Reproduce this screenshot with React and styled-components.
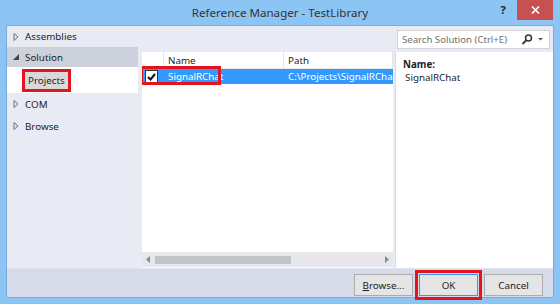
import React from 'react';
import styled, { createGlobalStyle } from 'styled-components';

const Global = createGlobalStyle`
  html, body { margin: 0; padding: 0; }
  body {
    width: 560px; height: 304px; overflow: hidden;
    font-family: "Noto Sans", "Open Sans", sans-serif;
    color: #1e1e1e;
  }
`;

const Window = styled.div`
  width: 560px; height: 304px; box-sizing: border-box;
  background: #8cc4f4;
  display: flex; flex-direction: column;
`;

const TitleBar = styled.div`
  height: 25px; flex: none;
  display: grid; grid-template-columns: 1fr auto 1fr; align-items: start;
`;

const Title = styled.div`
  grid-column: 2; line-height: 26px; font-size: 11.6px; color: #333;
`;

const Controls = styled.div`
  grid-column: 3; justify-self: end; display: flex; align-items: flex-start;
  margin-right: 7px;
`;

const HelpBtn = styled.div`
  width: 20px; height: 20px; line-height: 20px; text-align: center;
  font-size: 11px; font-weight: 700; color: #222;
  margin-right: 4px;
`;

const CloseBtn = styled.div`
  width: 36px; height: 20px; background: #c75050;
  display: flex; align-items: center; justify-content: center;
`;

const Frame = styled.div`
  flex: 1; margin: 0 6px 6px 6px; border: 1px solid #78abd9;
  display: flex; flex-direction: column; background: #e8ebf4;
  min-height: 0;
`;

const Main = styled.div`
  flex: 1; display: flex; min-height: 0;
`;

const Sidebar = styled.div`
  width: 131px; flex: none; display: flex; flex-direction: column;
`;

const NavRow = styled.div`
  height: ${p => p.$h || 22}px; display: flex; align-items: center;
  padding-left: ${p => p.$indent || 6}px;
  background: ${p => p.$bg || 'transparent'};
  font-size: 9.8px;
`;

const Arrow = styled.span`
  width: 6px; display: inline-flex; align-items: center; margin-right: 6px;
`;

const SelLabel = styled.span`
  background: #d9d9dc; padding: 0 3px; line-height: 17px;
  outline: 3px solid #e3141b; outline-offset: 0px;
`;

const RightArea = styled.div`
  flex: 1; display: flex; flex-direction: column; padding-left: 4px; min-width: 0;
`;

const TopBar = styled.div`
  height: 26px; flex: none; display: flex; align-items: center; justify-content: flex-end;
  padding-right: 3px;
`;

const Search = styled.div`
  width: 143px; height: 17px; background: #fff; border: 1px solid #cfd3dc;
  display: flex; align-items: center; padding: 0 4px 0 4px; box-sizing: content-box;
  font-size: 9.6px; color: #717171;
`;

const SearchText = styled.span` flex: 1; white-space: nowrap; `;

const Panels = styled.div`
  flex: 1; display: flex; min-height: 0;
`;

const ListPanel = styled.div`
  width: 251px; flex: none; background: #fff; display: flex; flex-direction: column;
  overflow: hidden;
`;

const HeaderRow = styled.div`
  height: 16px; display: grid; grid-template-columns: 22px 120px 1fr;
  border-bottom: 1px solid #e5e5e5; font-size: 9.8px; flex: none;
`;

const HeadCell = styled.div`
  padding-left: 4px; display: flex; align-items: center;
  border-right: 1px solid #e5e5e5; white-space: nowrap;
`;

const DataRow = styled.div`
  height: 15px; display: grid; grid-template-columns: 22px 120px 109px;
  background: #3399ff; color: #fff; font-size: 9.8px; flex: none;
  white-space: nowrap;
`;

const Cell = styled.div`
  padding-left: 4px; display: flex; align-items: center; overflow: hidden;
`;

const CheckCell = styled.div`
  display: flex; align-items: center; padding-left: 3px; position: relative;
`;

const Annot = styled.div`
  position: absolute; left: -2px; top: -3px; width: 75px; height: 13px;
  border: 3px solid #e3141b; pointer-events: none;
`;

const Box = styled.div`
  width: 11px; height: 11px; background: #fff; border: 1px solid #333;
  display: flex; align-items: center; justify-content: center;
`;

const Spacer = styled.div` flex: 1; `;

const HScroll = styled.div`
  height: 15px; flex: none; background: #e8e8ec; display: flex; align-items: center;
  padding: 0 4px; gap: 5px; margin-bottom: 1px;
`;

const Track = styled.div`
  flex: 1; height: 8px;
`;

const Thumb = styled.div`
  width: 136px; height: 8px; background: #c2c3c9;
`;

const Divider = styled.div`
  width: 3px; flex: none; border-right: 1px solid #d8dbe3; box-sizing: border-box;
`;

const Details = styled.div`
  flex: 1; background: #fff; padding: 6px 7px; font-size: 9.8px;
`;

const DetailLabel = styled.div` font-weight: 700; line-height: 13px; `;
const DetailValue = styled.div` padding-left: 2px; line-height: 13px; `;

const BottomBar = styled.div`
  height: 29px; flex: none; background: #d6dbe9; border-top: 1px solid #dfe3ee;
  box-sizing: border-box;
  display: flex; justify-content: flex-end; align-items: flex-start;
  padding: 5px 10px 0 0; gap: 6px;
`;

const BtnWrap = styled.div`
  outline: ${p => p.$marked ? '3px solid #e3141b' : 'none'};
  outline-offset: 1px;
`;

const Button = styled.div`
  width: 57px; height: 20px; background: #e5e5e5;
  border: 1px solid ${p => p.$default ? '#3399ff' : '#acacac'};
  display: flex; align-items: center; justify-content: center;
  font-size: 9.8px; color: #1e1e1e;
`;

const Collapsed = () => (
  <svg width="6" height="8" viewBox="0 0 6 8"><path d="M1 0.5 L5 4 L1 7.5 Z" fill="none" stroke="#717171" strokeWidth="1" /></svg>
);
const Expanded = () => (
  <svg width="6" height="6" viewBox="0 0 6 6"><path d="M6 0 L6 6 L0 6 Z" fill="#444" /></svg>
);

export default function App() {
  return (
    <>
      <Global />
      <Window>
        <TitleBar>
          <Title>Reference Manager - TestLibrary</Title>
          <Controls>
            <HelpBtn>?</HelpBtn>
            <CloseBtn>
              <svg width="9" height="8" viewBox="0 0 9 8"><path d="M1 0.5 L8 7.5 M8 0.5 L1 7.5" stroke="#fff" strokeWidth="1.6" /></svg>
            </CloseBtn>
          </Controls>
        </TitleBar>
        <Frame>
          <Main>
            <Sidebar>
              <NavRow $h={21}><Arrow><Collapsed /></Arrow>Assemblies</NavRow>
              <NavRow $h={20} $bg="#cdd1dc"><Arrow><Expanded /></Arrow>Solution</NavRow>
              <NavRow $h={26} $bg="#fff" $indent={18}><SelLabel>Projects</SelLabel></NavRow>
              <NavRow $h={22}><Arrow><Collapsed /></Arrow>COM</NavRow>
              <NavRow $h={22}><Arrow><Collapsed /></Arrow>Browse</NavRow>
            </Sidebar>
            <RightArea>
              <TopBar>
                <Search>
                  <SearchText>Search Solution (Ctrl+E)</SearchText>
                  <svg width="12" height="11" viewBox="0 0 12 11"><circle cx="7.5" cy="4" r="3" fill="none" stroke="#333" strokeWidth="1.5" /><path d="M5.5 6 L1.5 10" stroke="#333" strokeWidth="1.8" /></svg>
                  <svg width="9" height="8" viewBox="0 0 9 8" style={{ marginLeft: 3 }}><path d="M2 3 L7 3 L4.5 5.5 Z" fill="#555" /></svg>
                </Search>
              </TopBar>
              <Panels>
                <ListPanel>
                  <HeaderRow>
                    <HeadCell />
                    <HeadCell>Name</HeadCell>
                    <HeadCell>Path</HeadCell>
                  </HeaderRow>
                  <DataRow>
                    <CheckCell>
                      <Box>
                        <svg width="9" height="8" viewBox="0 0 9 8"><path d="M1 4 L3.5 6.5 L8 1" fill="none" stroke="#111" strokeWidth="2" /></svg>
                      </Box>
                      <Annot />
                    </CheckCell>
                    <Cell>SignalRChat</Cell>
                    <Cell>C:\Projects\SignalRChat\SignalRChat</Cell>
                  </DataRow>
                  <Spacer />
                  <HScroll>
                    <svg width="4" height="7" viewBox="0 0 4 7"><path d="M4 0 L0 3.5 L4 7 Z" fill="#868999" /></svg>
                    <Track><Thumb /></Track>
                    <svg width="4" height="7" viewBox="0 0 4 7"><path d="M0 0 L4 3.5 L0 7 Z" fill="#868999" /></svg>
                  </HScroll>
                </ListPanel>
                <Divider />
                <Details>
                  <DetailLabel>Name:</DetailLabel>
                  <DetailValue>SignalRChat</DetailValue>
                </Details>
              </Panels>
            </RightArea>
          </Main>
          <BottomBar>
            <BtnWrap><Button><span><u>B</u>rowse...</span></Button></BtnWrap>
            <BtnWrap $marked><Button $default>OK</Button></BtnWrap>
            <BtnWrap><Button>Cancel</Button></BtnWrap>
          </BottomBar>
        </Frame>
      </Window>
    </>
  );
}
